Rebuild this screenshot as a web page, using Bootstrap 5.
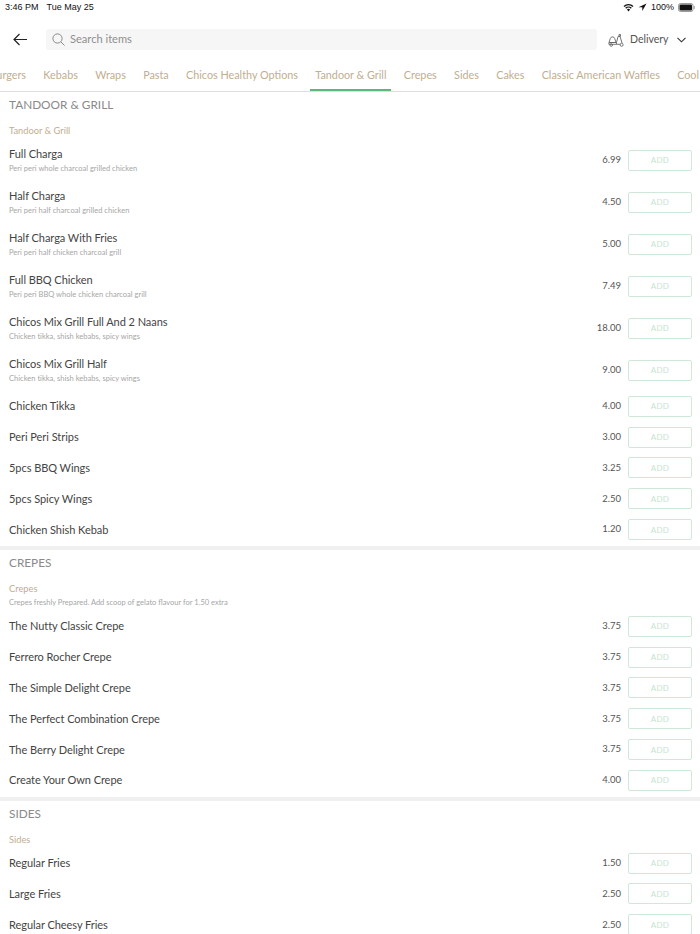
<!DOCTYPE html>
<html lang="en">
<head>
  <meta charset="utf-8">
  <title>Menu</title>
  <meta name="viewport" content="width=device-width, initial-scale=1">
  <link href="https://cdn.jsdelivr.net/npm/bootstrap@5.3.3/dist/css/bootstrap.min.css" rel="stylesheet">
  <style>
    html, body { height: 934px; overflow: hidden; }
    body { font-family: Lato, "Liberation Sans", sans-serif; color: #444; background: #fff; }
    .status-bar { height: 14px; padding: 0 5px; font: 9px/14px "Liberation Sans", sans-serif; color: #111; }
    .top-bar { height: 21px; margin-top: 15px; padding-left: 13px; }
    .back-btn { width: 33px; }
    .search-box { width: 551px; height: 21px; background: #f6f6f6; border-radius: 3px; padding-left: 6px; gap: 5px; font-size: 11.1px; color: #8f8f8f; }
    .delivery-pick { margin-left: 11px; gap: 6px; font-size: 10.5px; color: #555; }
    .delivery-pick .chev { margin-left: 2px; }
    .tab-strip { height: 42px; border-bottom: 1px solid #dedede; overflow: hidden; gap: 7.3px; margin-left: -15.5px; width: 716px; white-space: nowrap; }
    .tab-item { height: 41px; padding: 9px 5px 0; font-size: 10.8px; color: #bfae8f; flex: none; display: flex; align-items: center; }
    .tab-item.is-active { border-bottom: 2px solid #5cb97d; padding-top: 11px; }
    .menu-group { padding: 0 8px 1px 9px; }
    .menu-group + .menu-group { border-top: 4px solid #f0f0f0; }
    .group-title { font-size: 11.8px; line-height: 16px; color: #8a8a8a; padding-top: 5px; box-sizing: content-box; }
    .group-sub { font-size: 9.3px; line-height: 12px; color: #bfae8f; margin-top: 12px; }
    .group-note { font-size: 7.5px; line-height: 10px; color: #a6a6a6; margin-top: 3px; }
    .dish-row { height: 30.8px; }
    .dish-row.has-desc { height: 42px; }
    .dish-name { font-size: 11px; line-height: 14px; color: #444; letter-spacing: -.05px; }
    .dish-desc { font-size: 7.5px; line-height: 10px; color: #a6a6a6; margin-top: 3px; letter-spacing: .02px; }
    .dish-price { font-size: 9.5px; color: #555; margin-right: 7px; }
    .add-btn { width: 64px; height: 21px; padding: 0; border: 1px solid #cfe8d8; border-radius: 2px; background: #fff; font-size: 8px; color: #c6e4d1; letter-spacing: .3px; }
    .rows-first { margin-top: 2px; }
    .rows-note { margin-top: 3px; }
  </style>
</head>
<body>
  <div class="status-bar d-flex justify-content-between align-items-center">
    <div class="d-flex gap-2"><span>3:46 PM</span><span>Tue May 25</span></div>
    <div class="d-flex align-items-center gap-1">
      <svg width="11" height="9" viewBox="0 0 11 9"><path d="M.5 3a7 7 0 0 1 10 0l-1 1a5.600 5.600 0 0 0-8 0zM2.200 4.800a4.600 4.600 0 0 1 6.600 0l-1 1a3.200 3.200 0 0 0-4.600 0zM3.900 6.600a2.200 2.200 0 0 1 3.200 0L5.500 8.400z" fill="#111"/></svg>
      <svg width="9" height="9" viewBox="0 0 9 9"><path d="M8.500.5 .5 4.200h3.800v3.800z" fill="#111"/></svg>
      <span>100%</span>
      <svg width="17" height="9" viewBox="0 0 17 9"><rect x=".5" y=".5" width="14.500" height="8" rx="2" fill="none" stroke="#999"/><rect x="1.500" y="1.500" width="12.500" height="6" rx="1" fill="#111"/><rect x="15.700" y="3" width="1" height="3" fill="#999"/></svg>
    </div>
  </div>

  <div class="top-bar d-flex align-items-center">
    <div class="back-btn d-flex">
      <svg width="15" height="13" viewBox="0 0 15 13" fill="none" stroke="#222" stroke-width="1.200"><path d="M14 6.500H1M6.500 1 1 6.500 6.500 12"/></svg>
    </div>
    <div class="search-box d-flex align-items-center">
      <svg width="13" height="13" viewBox="0 0 13 13" fill="none" stroke="#8a8a8a" stroke-width="1"><circle cx="5.500" cy="5.500" r="4.600"/><path d="m9 9 3.500 3.500"/></svg>
      <span>Search items</span>
    </div>
    <div class="delivery-pick d-flex align-items-center">
      <svg width="16" height="14" viewBox="0 0 16 14" fill="none" stroke="#666" stroke-width=".9"><path d="M1 9.500 2.300 5.500a2.300 2.300 0 0 1 4.400 0L8 9.500zM1 9.500h7.500v1.800H.8zM10 3.500 8.500 9.500M10 3.500l2-.2 2 6.700M12.500 1.500h-1.500v1.800h1.500z"/><circle cx="3.200" cy="12" r="1.300"/><circle cx="13.600" cy="11.800" r="1.500"/><path d="M8.500 11.300h3.600"/></svg>
      <span>Delivery</span>
      <svg class="chev" width="9" height="6" viewBox="0 0 9 6" fill="none" stroke="#333" stroke-width="1.100"><path d="m.5.800 4 4 4-4"/></svg>
    </div>
  </div>

  <div class="tab-strip d-flex" id="tabs"></div>
  <div id="menu"></div>

  <template id="rowTemplate">
    <div class="dish-row d-flex align-items-center">
      <div class="flex-grow-1">
        <div class="dish-name"></div>
        <div class="dish-desc"></div>
      </div>
      <span class="dish-price"></span>
      <button type="button" class="add-btn">ADD</button>
    </div>
  </template>

  <script src="https://cdn.jsdelivr.net/npm/bootstrap@5.3.3/dist/js/bootstrap.bundle.min.js"></script>
  <script>
  const tabs = ["Burgers", "Kebabs", "Wraps", "Pasta", "Chicos Healthy Options", "Tandoor & Grill", "Crepes", "Sides", "Cakes", "Classic American Waffles", "Cool Drinks"];

  const menu = [
    { title: "TANDOOR & GRILL", sub: "Tandoor & Grill", items: [
      ["Full Charga", "6.99", "Peri peri whole charcoal grilled chicken"],
      ["Half Charga", "4.50", "Peri peri half charcoal grilled chicken"],
      ["Half Charga With Fries", "5.00", "Peri peri half chicken charcoal grill"],
      ["Full BBQ Chicken", "7.49", "Peri peri BBQ whole chicken charcoal grill"],
      ["Chicos Mix Grill Full And 2 Naans", "18.00", "Chicken tikka, shish kebabs, spicy wings"],
      ["Chicos Mix Grill Half", "9.00", "Chicken tikka, shish kebabs, spicy wings"],
      ["Chicken Tikka", "4.00"],
      ["Peri Peri Strips", "3.00"],
      ["5pcs BBQ Wings", "3.25"],
      ["5pcs Spicy Wings", "2.50"],
      ["Chicken Shish Kebab", "1.20"]
    ]},
    { title: "CREPES", sub: "Crepes", note: "Crepes freshly Prepared. Add scoop of gelato flavour for 1.50 extra", items: [
      ["The Nutty Classic Crepe", "3.75"],
      ["Ferrero Rocher Crepe", "3.75"],
      ["The Simple Delight Crepe", "3.75"],
      ["The Perfect Combination Crepe", "3.75"],
      ["The Berry Delight Crepe", "3.75"],
      ["Create Your Own Crepe", "4.00"]
    ]},
    { title: "SIDES", sub: "Sides", items: [
      ["Regular Fries", "1.50"],
      ["Large Fries", "2.50"],
      ["Regular Cheesy Fries", "2.50"]
    ]}
  ];

  tabs.forEach(name => {
    const tab = document.createElement("div");
    tab.className = "tab-item" + (name === "Tandoor & Grill" ? " is-active" : "");
    tab.textContent = name;
    document.getElementById("tabs").appendChild(tab);
  });

  const tpl = document.getElementById("rowTemplate");
  menu.forEach(group => {
    const box = document.createElement("section");
    box.className = "menu-group";
    box.innerHTML = `<div class="group-title"></div><div class="group-sub"></div>`;
    box.querySelector(".group-title").textContent = group.title;
    box.querySelector(".group-sub").textContent = group.sub;
    if (group.note) {
      const note = document.createElement("div");
      note.className = "group-note";
      note.textContent = group.note;
      box.appendChild(note);
    }
    const rows = document.createElement("div");
    rows.className = group.note ? "rows-note" : "rows-first";
    group.items.forEach(([name, price, desc]) => {
      const clone = tpl.content.cloneNode(true);
      clone.querySelector(".dish-name").textContent = name;
      clone.querySelector(".dish-price").textContent = price;
      if (desc) {
        clone.querySelector(".dish-row").classList.add("has-desc");
        clone.querySelector(".dish-desc").textContent = desc;
      } else {
        clone.querySelector(".dish-desc").remove();
      }
      rows.appendChild(clone);
    });
    box.appendChild(rows);
    document.getElementById("menu").appendChild(box);
  });
  </script>
</body>
</html>
